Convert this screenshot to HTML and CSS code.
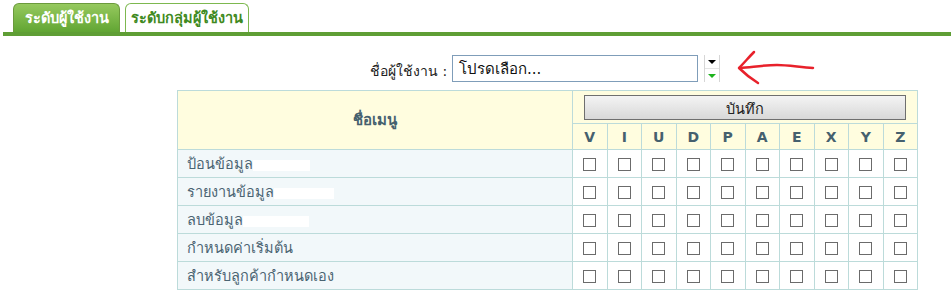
FILE: index.html
```html
<!DOCTYPE html>
<html lang="th">
<head>
    <meta charset="UTF-8" />
    <title>สิทธิ์การใช้งาน</title>
    <link rel="stylesheet" href="styles.css">
</head>
<body>

    <div class="tabs">
        <a href="#" class="tab active">ระดับผู้ใช้งาน</a>
        <a href="#" class="tab">ระดับกลุ่มผู้ใช้งาน</a>
    </div>
    <div class="tab-line"></div>

    <div class="picker">
        <label for="user">ชื่อผู้ใช้งาน :</label>
        <div class="select-box">
            <span class="select-text">โปรดเลือก...</span>
        </div>
        <div class="spin">
            <span class="spin-up"><i class="tri black"></i></span>
            <span class="spin-down"><i class="tri green"></i></span>
        </div>
        <svg class="pointer" width="90" height="36" viewBox="0 0 90 36">
            <path d="M76 19 C62 18 50 16 40 16 C28 16 16 18 3 19" fill="none" stroke="#e8212b" stroke-width="2.5" stroke-linecap="round"/>
            <path d="M17 3 C12 8 7 14 2 19 C7 24 13 29 21 34" fill="none" stroke="#e8212b" stroke-width="2.5" stroke-linecap="round" stroke-linejoin="round"/>
        </svg>
    </div>

    <table class="perm">
        <colgroup>
            <col class="col-name">
            <col span="10">
        </colgroup>
        <thead>
            <tr class="row-save">
                <th rowspan="2" class="menu-head">ชื่อเมนู</th>
                <th colspan="10"><button class="save-btn">บันทึก</button></th>
            </tr>
            <tr class="row-letters" id="letters"></tr>
        </thead>
        <tbody id="menu-rows"></tbody>
    </table>

    <script>
        const letters = ["V", "I", "U", "D", "P", "A", "E", "X", "Y", "Z"];
        const menus = [
            { name: "ป้อนข้อมูล", mask: 57 },
            { name: "รายงานข้อมูล", mask: 60 },
            { name: "ลบข้อมูล", mask: 66 },
            { name: "กำหนดค่าเริ่มต้น", mask: 0 },
            { name: "สำหรับลูกค้ากำหนดเอง", mask: 0 }
        ];

        const letterRow = document.getElementById("letters");
        letters.forEach(l => {
            const th = document.createElement("th");
            th.textContent = l;
            letterRow.appendChild(th);
        });

        const body = document.getElementById("menu-rows");
        menus.forEach(menu => {
            const tr = document.createElement("tr");
            const name = document.createElement("td");
            name.className = "menu-name";
            name.textContent = menu.name;
            if (menu.mask) {
                const mask = document.createElement("span");
                mask.className = "mask";
                mask.style.width = menu.mask + "px";
                name.appendChild(mask);
            }
            tr.appendChild(name);
            letters.forEach(() => {
                const td = document.createElement("td");
                td.innerHTML = '<input type="checkbox" class="check">';
                tr.appendChild(td);
            });
            body.appendChild(tr);
        });
    </script>

</body>
</html>
```

FILE: styles.css
```css
body {
    margin: 0;
    font-family: Tahoma, "DejaVu Sans", sans-serif;
    font-size: 13px;
    background-color: #fff;
    color: #333;
}

/* tabs */
.tabs {
    display: flex;
    gap: 5px;
    padding: 3px 0 0 13px;
}

.tab {
    display: block;
    width: 122px;
    height: 28px;
    line-height: 29px;
    text-align: center;
    border: 1px solid #7db84f;
    border-bottom: none;
    border-radius: 6px 6px 0 0;
    background-color: #fff;
    color: #3f8a22;
    font-weight: bold;
    font-size: 14.5px;
    text-decoration: none;
}

.tab.active {
    width: 105px;
    border-color: #6b9a3c;
    background: linear-gradient(#96c95e, #61a533);
    color: #fff;
}

.tab-line {
    height: 4px;
    margin-left: 3px;
    background-color: #5f9e35;
}

/* user picker */
.picker {
    position: relative;
    display: flex;
    align-items: center;
    margin: 19px 0 8px 370px;
    height: 27px;
}

.picker label {
    width: 82px;
    color: #222;
    font-size: 14px;
    margin-top: 4px;
    white-space: nowrap;
}

.select-box {
    display: flex;
    align-items: center;
    width: 246px;
    height: 27px;
    padding-left: 6px;
    box-sizing: border-box;
    border: 1px solid #7f9db9;
}

.select-text {
    color: #111;
    font-size: 15px;
}

.spin {
    display: flex;
    flex-direction: column;
    width: 14px;
    height: 27px;
    margin-left: 6px;
    border-left: 1px solid #d6d6d6;
    border-right: 1px solid #d6d6d6;
}

.spin span {
    flex: 1;
    display: flex;
    justify-content: center;
    align-items: center;
}

.spin-up {
    border-bottom: 1px solid #e4e4e4;
}

.tri {
    width: 0;
    height: 0;
    border-left: 4px solid transparent;
    border-right: 4px solid transparent;
    border-top: 4px solid #000;
}

.tri.green {
    border-top-color: #1db31d;
}

.pointer {
    position: absolute;
    left: 367px;
    top: -6px;
}

/* permission table */
.perm {
    margin-left: 177px;
    width: 741px;
    border-collapse: collapse;
    table-layout: fixed;
}

.col-name {
    width: 395px;
}

.perm th,
.perm td {
    border: 1px solid #bcdbda;
    padding: 0;
}

.perm th {
    background-color: #fffddf;
    color: #45606e;
    font-weight: bold;
}

.row-save {
    height: 33px;
}

.menu-head {
    font-size: 15px;
}

.row-letters {
    height: 26px;
}

.row-letters th {
    font-family: "DejaVu Sans", sans-serif;
    font-size: 14px;
}

.save-btn {
    display: block;
    width: 322px;
    height: 25px;
    margin: 0 auto;
    border: 1px solid #6f6f6f;
    background: linear-gradient(#f4f4f4, #d8d8d8);
    font-family: Tahoma, "DejaVu Sans", sans-serif;
    font-size: 14.5px;
    color: #222;
}

.perm tbody tr {
    height: 28px;
}

.perm td {
    text-align: center;
    background-color: #fff;
}

.perm td.menu-name {
    text-align: left;
    padding-left: 9px;
    background-color: #f2f8fa;
    color: #4b6472;
    font-size: 14.5px;
}

.mask {
    display: inline-block;
    height: 11px;
    background-color: #fff;
    vertical-align: middle;
}

.check {
    appearance: none;
    width: 13px;
    height: 13px;
    margin: 4px 0 0;
    border: 1px solid #6b6b6b;
    background-color: #fff;
}
```
